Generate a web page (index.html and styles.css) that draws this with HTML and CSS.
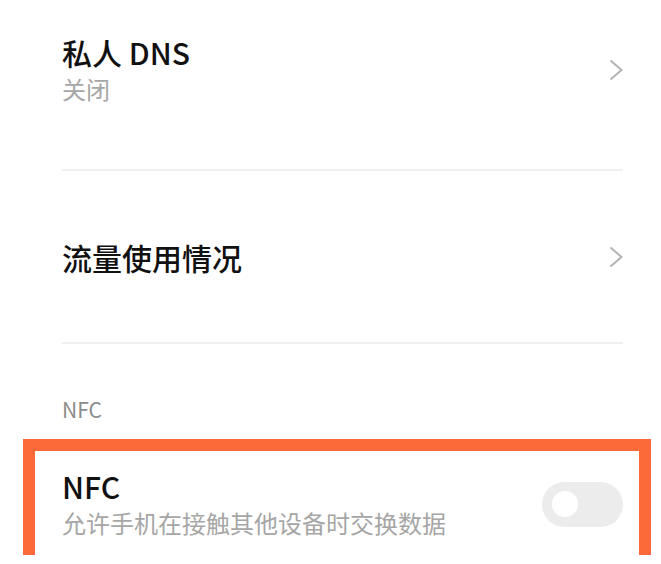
FILE: index.html
```html
<!DOCTYPE html>
<html lang="zh-CN">
<head>
  <meta charset="UTF-8" />
  <meta name="viewport" content="width=device-width, initial-scale=1.0"/>
  <title>网络设置</title>
  <link rel="stylesheet" href="styles.css">
</head>
<body>
  <main class="settings">
    <div class="row row-first">
      <div class="row-text">
        <div class="row-title">私人 DNS</div>
        <div class="row-sub">关闭</div>
      </div>
      <svg class="chevron" width="14" height="22" viewBox="0 0 14 22">
        <polyline points="1.5,1.5 12.5,11 1.5,20.5" />
      </svg>
    </div>
    <div class="divider"></div>

    <div class="row row-single">
      <div class="row-text">
        <div class="row-title">流量使用情况</div>
      </div>
      <svg class="chevron" width="14" height="22" viewBox="0 0 14 22">
        <polyline points="1.5,1.5 12.5,11 1.5,20.5" />
      </svg>
    </div>
    <div class="divider"></div>

    <div class="section-label">NFC</div>

    <!-- highlighted item -->
    <div class="highlight">
      <div class="row row-nfc">
        <div class="row-text">
          <div class="row-title">NFC</div>
          <div class="row-sub">允许手机在接触其他设备时交换数据</div>
        </div>
        <div class="switch"><span class="knob"></span></div>
      </div>
    </div>
  </main>
</body>
</html>
```

FILE: styles.css
```css
body {
  margin: 0;
  background: #fff;
  font-family: "Noto Sans CJK SC", "Noto Sans", sans-serif;
  color: #111;
}
.settings {
  width: 661px;
  height: 564px;
  overflow: hidden;
}
.row {
  display: flex;
  align-items: center;
  justify-content: space-between;
  padding: 0 38px 0 62px;
}
.row-first {
  padding-top: 33px;
  padding-bottom: 62px;
}
.row-single {
  height: 171px;
}
.row-title {
  font-size: 30px;
  line-height: 38px;
  font-weight: 500;
}
.row-sub {
  font-size: 24px;
  line-height: 36px;
  color: #a6a6a6;
}
.chevron {
  display: block;
  fill: none;
  stroke: #b3b3b3;
  stroke-width: 2;
}
.divider {
  height: 2px;
  background: #efefef;
  margin: 0 38px 0 62px;
}
.section-label {
  padding: 53px 0 18px 62px;
  font-size: 21px;
  line-height: 24px;
  color: #8c8c8c;
}
.highlight {
  margin-left: 23px;
  width: 604px;
  border: 12px solid #fd6a39;
  border-bottom: none;
  height: 104px;
}
.row-nfc {
  padding: 16px 16px 14px 27px;
}
.switch {
  width: 81px;
  height: 45px;
  border-radius: 23px;
  background: #ececec;
  display: flex;
  align-items: center;
  padding-left: 10px;
  box-sizing: border-box;
}
.knob {
  width: 26px;
  height: 26px;
  border-radius: 50%;
  background: #fff;
}
```
